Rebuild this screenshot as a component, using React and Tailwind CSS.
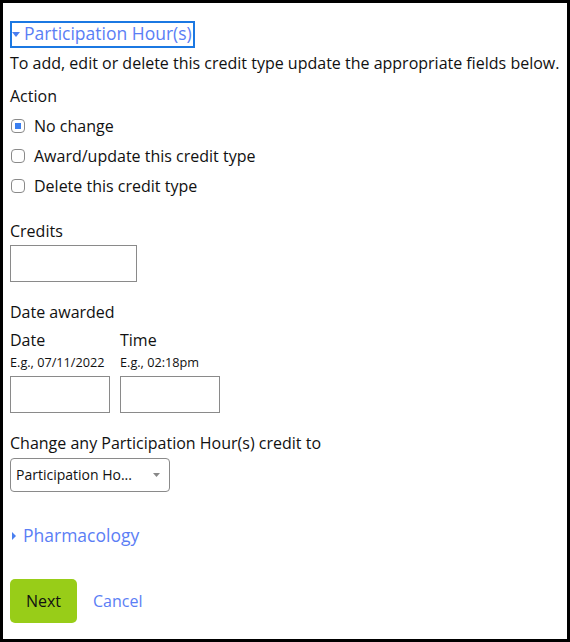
export default function App() {
  const font = { fontFamily: '"Open Sans", "Liberation Sans", sans-serif' };
  const Check = ({ checked, label }) => (
    <div className="flex items-center h-[30px]">
      <span className="w-[14px] h-[14px] ml-[1px] rounded-[4px] border border-[#8a8a8a] flex items-center justify-center bg-white">
        {checked && <span className="w-[6px] h-[6px] bg-[#3b7ff0]" />}
      </span>
      <span className="ml-[9px] text-[16px] text-[#111]">{label}</span>
    </div>
  );
  return (
    <div style={font} className="w-[570px] h-[642px] border-[3px] border-black bg-white text-[#111] box-border">
      <div className="pl-[7px] pt-[16px]">
        <div className="inline-flex items-center h-[27px] border-2 border-[#1b78e2] pr-[1px]">
          <svg width="8" height="5" viewBox="0 0 8 5" className="mt-[1px]"><path d="M0 0h8L4 5z" fill="#4a7ff0" /></svg>
          <span className="ml-[4px] text-[17.5px] text-[#5b7ef5] leading-none">Participation Hour(s)</span>
        </div>
        <div className="text-[16px] mt-[4px] leading-[22px]">To add, edit or delete this credit type update the appropriate fields below.</div>
        <div className="text-[16px] mt-[11px] leading-[22px]">Action</div>
        <div className="mt-[4px]">
          <Check checked label="No change" />
          <Check label="Award/update this credit type" />
          <Check label="Delete this credit type" />
        </div>
        <div className="text-[16px] mt-[19px] leading-[22px]">Credits</div>
        <div className="mt-[3px] w-[127px] h-[37px] border border-[#8a8a8a]" />
        <div className="text-[16px] mt-[19px] leading-[22px]">Date awarded</div>
        <div className="flex gap-[10px] mt-[6px]">
          <div className="w-[100px]">
            <div className="text-[16px] leading-[22px]">Date</div>
            <div className="text-[12.7px] leading-[18px] mt-[2px] whitespace-nowrap">E.g., 07/11/2022</div>
            <div className="mt-[5px] w-[100px] h-[37px] border border-[#8a8a8a]" />
          </div>
          <div className="w-[100px]">
            <div className="text-[16px] leading-[22px]">Time</div>
            <div className="text-[12.7px] leading-[18px] mt-[2px] whitespace-nowrap">E.g., 02:18pm</div>
            <div className="mt-[5px] w-[100px] h-[37px] border border-[#8a8a8a]" />
          </div>
        </div>
        <div className="text-[16px] mt-[19px] leading-[22px]">Change any Participation Hour(s) credit to</div>
        <div className="mt-[4px] w-[160px] h-[34px] border border-[#8a8a8a] rounded-[4px] flex items-center pl-[5px] pr-[9px] justify-between">
          <span className="text-[14px]">Participation Ho...</span>
          <svg width="7" height="4" viewBox="0 0 7 4"><path d="M0 0h7L3.5 4z" fill="#888" /></svg>
        </div>
        <div className="flex items-center mt-[32px] h-[24px]">
          <svg width="4" height="8" viewBox="0 0 4 8" className="ml-[2px]"><path d="M0 0v8l4-4z" fill="#4a7ff0" /></svg>
          <span className="ml-[7px] text-[17.5px] text-[#5b7ef5]">Pharmacology</span>
        </div>
        <div className="flex items-center mt-[31px]">
          <div className="w-[67px] h-[44px] rounded-[5px] bg-[#98cd18] flex items-center justify-center text-[16px] text-[#111]">Next</div>
          <span className="ml-[16px] text-[16px] text-[#5b7ef5]">Cancel</span>
        </div>
      </div>
    </div>
  );
}
